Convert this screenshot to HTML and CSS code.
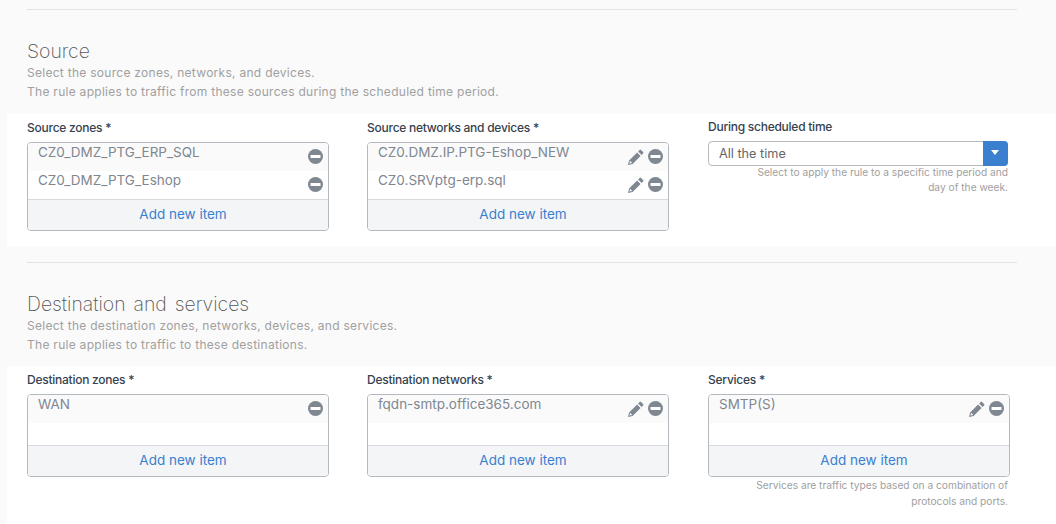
FILE: index.html
```html
<!DOCTYPE html>
<html lang="en">
<head>
<meta charset="utf-8">
<title>Rule</title>
<link rel="stylesheet" href="styles.css">
</head>
<body>
<svg class="defs" width="0" height="0" aria-hidden="true">
  <symbol id="minus" viewBox="0 0 15 15"><circle cx="7.500" cy="7.500" r="7.500" fill="#7f8791"/><rect x="2.500" y="5.900" width="10" height="3.200" rx=".6" fill="#fff"/></symbol>
  <symbol id="pencil" viewBox="0 0 16 16"><path fill="#7f8791" d="M11.600.9a1 1 0 0 1 1.400 0l2.100 2.100a1 1 0 0 1 0 1.400l-1.500 1.500-3.500-3.500zM9.100 3.400l3.500 3.500-8 8L0 16l1.100-4.600zM2.100 11.800l-.7 2.800 2.800-.7z"/></symbol>
</svg>
<section class="section first">
  <div class="head">
    <h2>Source</h2>
    <p>Select the source zones, networks, and devices.</p>
    <p>The rule applies to traffic from these sources during the scheduled time period.</p>
  </div>
  <div class="fields one">
    <div class="field">
      <label>Source zones *</label>
      <div class="box">
        <div class="item odd"><span>CZ0_DMZ_PTG_ERP_SQL</span><svg class="ic"><use href="#minus"/></svg></div>
        <div class="item"><span>CZ0_DMZ_PTG_Eshop</span><svg class="ic"><use href="#minus"/></svg></div>
        <div class="add">Add new item</div>
      </div>
    </div>
    <div class="field">
      <label>Source networks and devices *</label>
      <div class="box">
        <div class="item odd"><span>CZ0.DMZ.IP.PTG-Eshop_NEW</span><svg class="pen"><use href="#pencil"/></svg><svg class="ic"><use href="#minus"/></svg></div>
        <div class="item"><span>CZ0.SRVptg-erp.sql</span><svg class="pen"><use href="#pencil"/></svg><svg class="ic"><use href="#minus"/></svg></div>
        <div class="add">Add new item</div>
      </div>
    </div>
    <div class="field narrow">
      <label class="up">During scheduled time</label>
      <div class="select"><span>All the time</span><b class="caret"></b></div>
      <small class="tight">Select to apply the rule to a specific time period and day of the week.</small>
    </div>
  </div>
</section>
<section class="section second">
  <div class="head">
    <h2>Destination and services</h2>
    <p>Select the destination zones, networks, devices, and services.</p>
    <p>The rule applies to traffic to these destinations.</p>
  </div>
  <div class="fields two">
    <div class="field">
      <label>Destination zones *</label>
      <div class="box">
        <div class="item odd"><span>WAN</span><svg class="ic"><use href="#minus"/></svg></div>
        <div class="gap"></div>
        <div class="add">Add new item</div>
      </div>
    </div>
    <div class="field">
      <label>Destination networks *</label>
      <div class="box">
        <div class="item odd"><span>fqdn-smtp.office365.com</span><svg class="pen"><use href="#pencil"/></svg><svg class="ic"><use href="#minus"/></svg></div>
        <div class="gap"></div>
        <div class="add">Add new item</div>
      </div>
    </div>
    <div class="field">
      <label>Services *</label>
      <div class="box">
        <div class="item odd"><span>SMTP(S)</span><svg class="pen"><use href="#pencil"/></svg><svg class="ic"><use href="#minus"/></svg></div>
        <div class="gap"></div>
        <div class="add">Add new item</div>
      </div>
      <small>Services are traffic types based on a combination of protocols and ports.</small>
    </div>
  </div>
</section>
</body>
</html>
```
FILE: styles.css
```css
* { box-sizing: border-box; }
html, body { height: 524px; overflow: hidden; }
body {
  margin: 0;
  background: #fafafa;
  font-family: Inter, "Liberation Sans", sans-serif;
  color: #555;
}
.defs { display: block; height: 0; }
.section { padding-left: 7px; }
.first { padding-top: 9px; }
.second { padding-top: 16px; }
.head {
  margin: 0 39px 0 20px;
  border-top: 1px solid #e4e4e4;
}
.first .head { height: 105px; padding-top: 29px; }
.second .head { height: 104px; padding-top: 29px; }
h2 {
  margin: 0;
  font-size: 19.400px;
  line-height: 24px;
  font-weight: 200;
  word-spacing: 2.500px;
  color: #555;
}
.head p {
  margin: 0;
  font-size: 12px;
  line-height: 19px;
  letter-spacing: .28px;
  color: #a0a0a0;
}
.fields {
  display: grid;
  grid-template-columns: 340px 341px 302px;
  padding-left: 20px;
  background: #fff;
}
.one { height: 132px; padding-top: 6px; }
.two { height: 158px; padding-top: 6px; }
label {
  display: block;
  height: 22px;
  font-size: 12px;
  line-height: 16px;
  font-weight: 500;
  letter-spacing: -.25px;
  color: #36424f;
}
label.up { margin-top: -1px; }
.box {
  width: 302px;
  border: 1px solid #b4b9c0;
  border-radius: 4px;
  overflow: hidden;
}
.item {
  display: flex;
  align-items: flex-start;
  height: 28px;
  padding: 0 5px 0 10px;
  font-size: 13.500px;
  line-height: 18px;
  color: #7f8791;
}
.item span { flex: 1; }
.odd { background: #fafafa; }
.gap { height: 22px; }
.ic { width: 15px; height: 15px; margin-top: 6px; }
.pen { width: 16px; height: 16px; margin: 6px 4px 0 0; }
.add {
  height: 31px;
  padding-left: 10px;
  border-top: 1px solid #d6d9dd;
  background: #f4f5f7;
  text-align: center;
  font-size: 13.500px;
  line-height: 28px;
  color: #3a7fcf;
}
.narrow { width: 300px; }
.select {
  display: flex;
  height: 25px;
  border: 1px solid #b4b9c0;
  border-radius: 4px;
  font-size: 12.700px;
  line-height: 23px;
  color: #666;
  padding-left: 10px;
  position: relative;
}
.select span { flex: 1; }
.caret {
  width: 25px;
  margin: -1px -1px -1px 0;
  background: #3a80cf;
  border-radius: 0 4px 4px 0;
  position: relative;
}
.caret::after {
  content: "";
  position: absolute;
  left: 8px;
  top: 9px;
  border: 4.500px solid transparent;
  border-top: 5px solid #fff;
  border-bottom: 0;
}
small {
  display: block;
  width: 300px;
  padding-left: 40px;
  text-align: right;
  font-size: 10.200px;
  line-height: 16px;
  color: #a0a0a0;
}
.tight { margin-top: -1px; line-height: 15px; }
```
